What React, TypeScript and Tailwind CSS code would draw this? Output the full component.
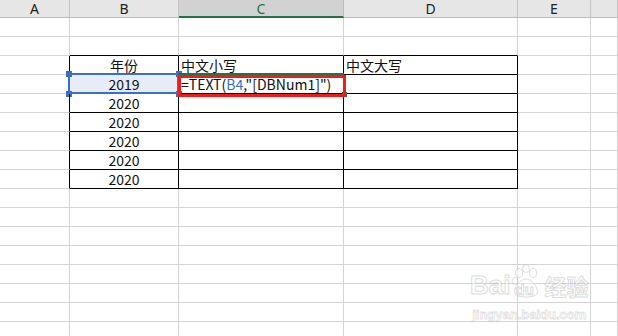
import type { ReactNode } from "react";

const FONT = "font-['Noto_Sans_CJK_SC','Noto_Sans',sans-serif]";
const COLS = ["A", "B", "C", "D", "E", ""];
const ROWS = Array.from({ length: 17 }, (_, i) => i + 1);

// table block lives in rows 3..9, columns B..D
const inTable = (r: number) => r >= 3 && r <= 9;

function cellBorder(r: number, c: number) {
  const tableCol = c >= 1 && c <= 3;
  const right =
    (c === 0 && inTable(r)) || (tableCol && inTable(r)) ? "border-r-black" : "border-r-[#d4d4d4]";
  const bottom =
    tableCol && (r === 2 || inTable(r)) ? "border-b-black" : "border-b-[#d4d4d4]";
  return `${right} ${bottom}`;
}

function Formula() {
  return (
    <span className="text-[#111]">
      =TEXT(<span className="text-[#3b6fc6]">B4</span>,"[DBNum1]")
    </span>
  );
}

function Handle({ pos }: { pos: string }) {
  return <span className={`absolute w-[6px] h-[6px] bg-[#3b6fc6] ${pos}`} />;
}

function cellContent(r: number, c: number): ReactNode {
  if (r === 3 && c === 1) return <span className="w-full text-center">年份</span>;
  if (r === 3 && c === 2) return <span className="pl-[2px]">中文小写</span>;
  if (r === 3 && c === 3) return <span className="pl-[2px]">中文大写</span>;
  if (r === 4 && c === 1)
    return (
      <>
        <div className="absolute left-[-2px] top-[-2px] right-[-1px] bottom-[-1px] border-2 border-[#3b6fc6] bg-[#e6edf8]" />
        <Handle pos="left-[-4px] top-[-4px]" />
        <Handle pos="right-[-4px] top-[-4px]" />
        <Handle pos="left-[-4px] bottom-[-4px]" />
        <Handle pos="right-[-4px] bottom-[-4px]" />
        <span className="relative w-full text-center">2019</span>
      </>
    );
  if (r === 4 && c === 2)
    return (
      <>
        <div className="absolute left-[-1px] right-[-1px] top-[-2px] h-[2px] bg-[#217346]" />
        <div className="absolute right-[-4px] bottom-[-4px] w-[5px] h-[5px] bg-[#217346]" />
        <span className="relative pl-[2px]">
          <Formula />
        </span>
        <div className="absolute left-[-1px] top-0 w-[168px] h-[22px] border-[3px] border-[#f41a1a]" />
      </>
    );
  if (r >= 5 && r <= 9 && c === 1) return <span className="w-full text-center">2020</span>;
  return null;
}

function Watermark() {
  return (
    <div className="absolute left-[470px] top-[264px] flex flex-col items-center opacity-50 pointer-events-none">
      <div className="flex items-end gap-[1px] text-white [-webkit-text-stroke:1px_#bdbdbd] font-['Liberation_Sans',sans-serif] font-bold">
        <span className="text-[26px] leading-[26px]">Bai</span>
        <div className="relative w-[30px] h-[34px]">
          <svg viewBox="0 0 30 34" className="absolute inset-0" fill="white" stroke="#bdbdbd" strokeWidth="1">
            <ellipse cx="8" cy="9" rx="3.5" ry="4.5" />
            <ellipse cx="15" cy="4.5" rx="3.5" ry="4" />
            <ellipse cx="22" cy="9" rx="3.5" ry="4.5" />
            <ellipse cx="4" cy="17" rx="3" ry="3.5" />
            <path d="M4 30 C2 24 9 15 15 15 C21 15 28 24 26 30 C24 34 6 34 4 30 Z" />
          </svg>
          <span className="absolute left-[4px] bottom-[1px] text-[15px] leading-[15px]">du</span>
        </div>
        <span className={`ml-[2px] text-[22px] leading-[26px] ${FONT}`}>经验</span>
      </div>
      <div className="mt-[10px] text-[13px] leading-[13px] text-white [-webkit-text-stroke:0.8px_#c4c4c4] font-['Liberation_Sans',sans-serif] font-bold">
        jingyan.baidu.com
      </div>
    </div>
  );
}

export default function App() {
  return (
    <div className={`relative w-[618px] h-[336px] overflow-hidden bg-white text-[14px] text-[#111] ${FONT}`}>
      <div className="grid grid-cols-[70px_109px_165px_174px_73px_1fr]">
        {COLS.map((name, c) => (
          <div
            key={name + c}
            className={
              c === 2
                ? "h-[18px] flex items-center justify-center bg-[#d2d2d2] border-r border-r-[#bcbcbc] border-b-2 border-b-[#217346] text-[#217346] leading-none"
                : "h-[18px] flex items-center justify-center bg-[#e6e6e6] border-r border-r-[#c4c4c4] border-b border-b-[#bcbcbc] text-[#222] leading-none"
            }
          >
            <span className={c === 2 ? "mt-[2px] font-['Noto_Sans',sans-serif]" : "font-['Noto_Sans',sans-serif]"}>{name}</span>
          </div>
        ))}
        {ROWS.map((r) =>
          COLS.map((_, c) => (
            <div
              key={`${r}-${c}`}
              className={`relative h-[19px] flex items-center whitespace-nowrap leading-[18px] border-r border-b ${cellBorder(r, c)} ${
                r === 4 && c === 2 ? "z-10" : ""
              }`}
            >
              {cellContent(r, c)}
            </div>
          ))
        )}
      </div>
      <Watermark />
    </div>
  );
}
